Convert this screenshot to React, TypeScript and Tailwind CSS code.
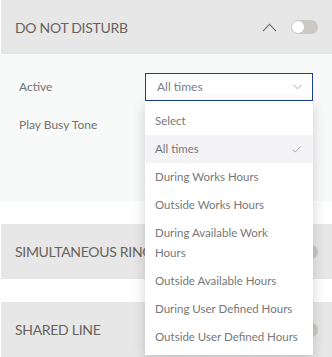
import React from "react";

const options: (string | string[])[] = [
  "Select",
  "All times",
  "During Works Hours",
  "Outside Works Hours",
  ["During Available Work", "Hours"],
  "Outside Available Hours",
  "During User Defined Hours",
  "Outside User Defined Hours",
];

function Toggle() {
  return (
    <div className="w-[27px] h-[14px] rounded-full bg-[#ccc8c3] flex items-center px-px">
      <div className="w-[12px] h-[12px] rounded-full bg-white" />
    </div>
  );
}

function ChevronUp() {
  return (
    <svg width="15" height="9" viewBox="0 0 15 9" fill="none" stroke="#6b6763" strokeWidth="1.1">
      <path d="M1 8.2 L7.5 1.2 L14 8.2" />
    </svg>
  );
}

function SectionHeader({ title, open, h }: { title: string; open?: boolean; h: string }) {
  return (
    <div className={h + " bg-[#e7e7e7] flex items-center justify-between pl-[14px] pr-[14px] border-l border-white"}>
      <span className="text-[14px] text-[#67625d] tracking-[-0.3px]">{title}</span>
      <div className="flex items-center gap-[14px]">
        {open && <ChevronUp />}
        <Toggle />
      </div>
    </div>
  );
}

export default function App() {
  return (
    <div className="w-[332px] h-[357px] overflow-hidden bg-white font-['Lato',sans-serif] relative">
      <SectionHeader title="DO NOT DISTURB" open h="h-[54px]" />

      <div className="h-[147px] bg-[#f8f9f9] pt-[19px] pl-[19px] pr-[19px] relative z-10">
        <div className="flex items-center justify-between">
          <span className="text-[12px] text-[#727272]">Active</span>
          <div className="relative w-[168px]">
            <div className="h-[28px] border border-[#1c3f8f] bg-white flex items-center justify-between pl-[11px] pr-[10px]">
              <span className="text-[12px] text-[#808080]">All times</span>
              <svg width="9" height="6" viewBox="0 0 9 6" fill="none" stroke="#aaa" strokeWidth="1">
                <path d="M0.5 0.8 L4.5 4.8 L8.5 0.8" />
              </svg>
            </div>
            <div className="absolute top-full left-0 w-[168px] bg-white pt-[6px] pb-[4px] shadow-[0_4px_12px_rgba(0,0,0,0.18)]">
              {options.map((o) => {
                const key = Array.isArray(o) ? o.join(" ") : o;
                return (
                  <div
                    key={key}
                    className={
                      "flex items-center justify-between pl-[10px] pr-[12px] py-[4px] " +
                      (key === "All times" ? "bg-[#f4f4f6]" : "")
                    }
                  >
                    <span className="text-[11.5px] leading-[20px] text-[#787878] whitespace-nowrap">
                      {Array.isArray(o) ? (
                        <>
                          {o[0]}
                          <br />
                          {o[1]}
                        </>
                      ) : (
                        o
                      )}
                    </span>
                    {key === "All times" && (
                      <svg width="9" height="7" viewBox="0 0 9 7" fill="none" stroke="#aaa" strokeWidth="1">
                        <path d="M0.5 3.8 L3.2 6 L8.5 0.6" />
                      </svg>
                    )}
                  </div>
                );
              })}
            </div>
          </div>
        </div>
        <div className="mt-[10px] h-[28px] flex items-center">
          <span className="text-[12px] text-[#727272]">Play Busy Tone</span>
        </div>
      </div>

      <div className="mt-[23px]">
        <SectionHeader title="SIMULTANEOUS RING" h="h-[55px]" />
      </div>
      <div className="mt-[23px]">
        <SectionHeader title="SHARED LINE" h="h-[55px]" />
      </div>
    </div>
  );
}
